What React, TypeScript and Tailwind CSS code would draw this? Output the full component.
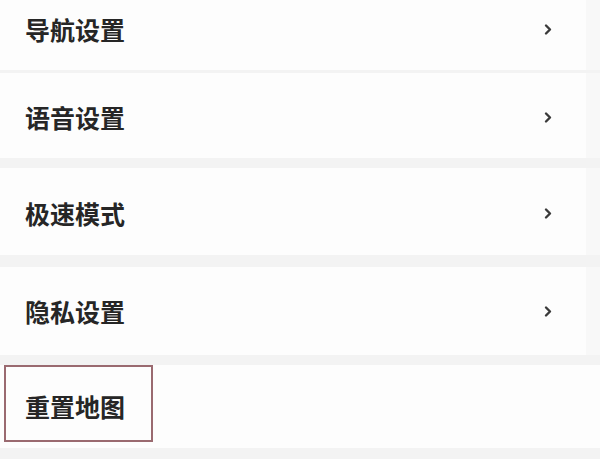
import type { ReactNode } from 'react';

// Settings list: four chevron rows, then the "reset map" row with its
// outlined highlight box.
const FONT = { fontFamily: '"Noto Sans CJK SC", "Noto Sans", sans-serif' };

function Chevron() {
  return (
    <svg width="10" height="13" viewBox="0 0 10 13" aria-hidden className="text-[#3a3a3a]">
      <path
        d="M3 2.5 L7 6.5 L3 10.5"
        fill="none"
        stroke="currentColor"
        strokeWidth="2.4"
        strokeLinecap="round"
        strokeLinejoin="round"
      />
    </svg>
  );
}

function Row({ label, className }: { label: ReactNode; className: string }) {
  return (
    <div className="flex w-[600px]">
      <div className={`flex w-[586px] items-center justify-between bg-[#fdfdfd] pl-[25px] pr-[33px] ${className}`}>
        <span className="text-[25px] font-semibold leading-none text-[#262626]">{label}</span>
        <Chevron />
      </div>
      <div className="flex-1 bg-[#f8f8f8]" />
    </div>
  );
}

export default function App() {
  return (
    <div style={FONT} className="flex h-[459px] w-[600px] flex-col overflow-hidden bg-[#f3f3f3]">
      <Row label="导航设置" className="h-[70px] pb-[12px]" />
      <div className="h-[3px]" />
      <Row label="语音设置" className="h-[85px] pt-[3px]" />
      <div className="h-[10px]" />
      <Row label="极速模式" className="h-[87px] pt-[3px]" />
      <div className="h-[12px]" />
      <Row label="隐私设置" className="h-[88px]" />
      <div className="h-[10px]" />
      <div className="flex h-[83px] w-[600px] items-start bg-[#fdfdfd] pl-[4px]">
        <div className="flex h-[77px] w-[149px] items-center border-2 border-[#9a6a70] pl-[19px] pt-[6px]">
          <span className="text-[25px] font-semibold leading-none text-[#262626]">重置地图</span>
        </div>
      </div>
    </div>
  );
}
